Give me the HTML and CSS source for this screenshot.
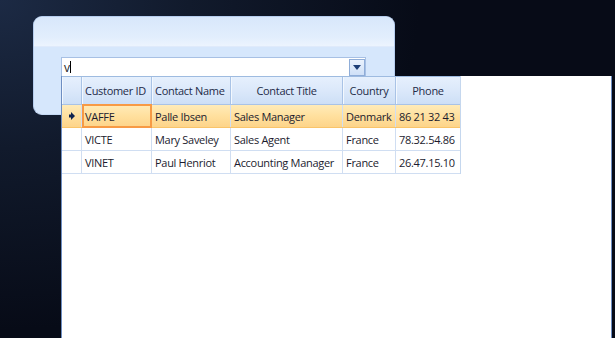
FILE: index.html
```html
<!DOCTYPE html>
<html>
<head>
<meta charset="utf-8">
<link rel="stylesheet" href="styles.css">
</head>
<body>
<div class="desk">
  <div class="panel">
    <div class="panel-top"></div>
    <div class="combo">
      <div class="combo-text">v<span class="caret"></span></div>
      <div class="combo-btn">
        <svg width="8" height="5" viewBox="0 0 8 5"><path d="M0 0 H8 L4 5 Z" fill="#1e3f77"/></svg>
      </div>
    </div>
  </div>
</div>
<div class="popup">
  <div class="grid">
    <div class="row head">
      <div class="cell rh"></div>
      <div class="cell c1">Customer ID</div>
      <div class="cell c2">Contact Name</div>
      <div class="cell c3 center">Contact Title</div>
      <div class="cell c4 center">Country</div>
      <div class="cell c5 center">Phone</div>
    </div>
    <div class="row sel">
      <div class="cell rh"><svg width="6" height="8" viewBox="0 0 6 8"><path d="M0 2.5 H2 V0 L6 4 L2 8 V5.5 H0 Z" fill="#0f2350"/></svg></div>
      <div class="cell c1 cur">VAFFE</div>
      <div class="cell c2">Palle Ibsen</div>
      <div class="cell c3">Sales Manager</div>
      <div class="cell c4">Denmark</div>
      <div class="cell c5">86 21 32 43</div>
    </div>
    <div class="row">
      <div class="cell rh"></div>
      <div class="cell c1">VICTE</div>
      <div class="cell c2">Mary Saveley</div>
      <div class="cell c3">Sales Agent</div>
      <div class="cell c4">France</div>
      <div class="cell c5">78.32.54.86</div>
    </div>
    <div class="row">
      <div class="cell rh"></div>
      <div class="cell c1">VINET</div>
      <div class="cell c2">Paul Henriot</div>
      <div class="cell c3">Accounting Manager</div>
      <div class="cell c4">France</div>
      <div class="cell c5">26.47.15.10</div>
    </div>
  </div>
</div>
</body>
</html>
```
FILE: styles.css
```css
html, body {
  margin: 0;
  padding: 0;
}
body {
  width: 615px;
  height: 338px;
  overflow: hidden;
  position: relative;
  font-family: "Open Sans", "Noto Sans", sans-serif;
  font-size: 11px;
  letter-spacing: -0.3px;
  color: #1b1b2e;
  background: radial-gradient(ellipse 420px 330px at 0px 0px, #1c2a44 0%, #111a2c 45%, #070b17 100%);
  background-color: #070b17;
}
.desk {
  padding: 16px 0 0 33px;
}
.panel {
  width: 362px;
  height: 99px;
  border-radius: 9px;
  background: #d6e7fc;
  overflow: hidden;
  box-sizing: border-box;
  border: 1px solid #b6cdee;
  border-bottom-color: #c5d9f3;
}
.panel-top {
  height: 29px;
  background: linear-gradient(to bottom, #d8e7fb 0%, #e2eefd 70%, #ecf4fe 100%);
  border-bottom: 1px solid #dfeafb;
}
.combo {
  margin: 10px 0 0 27px;
  width: 305px;
  height: 20px;
  box-sizing: border-box;
  border: 1px solid #a7c0e4;
  background: #fff;
  display: flex;
  align-items: stretch;
}
.combo-text {
  flex: 1;
  padding-left: 2px;
  line-height: 17px;
  font-size: 12px;
  color: #222;
  display: flex;
  align-items: center;
}
.caret {
  display: inline-block;
  width: 1px;
  height: 12px;
  background: #000;
}
.combo-btn {
  width: 16px;
  box-sizing: border-box;
  border: 1px solid #8fadd8;
  margin: 1px 0 0 0;
  height: 17px;
  background: linear-gradient(to bottom, #eaf2fd, #cfe0f7);
  display: flex;
  align-items: center;
  justify-content: center;
}
.popup {
  position: absolute;
  left: 61px;
  top: 76px;
  width: 551px;
  height: 270px;
  box-sizing: border-box;
  background: #fff;
  border-left: 1px solid #6e8ec2;
  border-right: 1px solid #6e8ec2;
}
.grid {
  width: 398px;
  border-right: 1px solid #c5d7ee;
}
.row {
  display: flex;
  height: 23px;
  border-bottom: 1px solid #d0def2;
  box-sizing: border-box;
}
.row.head {
  height: 29px;
  border-top: 1px solid #9ebbe0;
  border-bottom: 1px solid #a9c3e6;
  background: linear-gradient(to bottom, #e6f0fd 0%, #dbe8fa 50%, #cddff6 100%);
  color: #1e2b48;
}
.row.sel {
  background: linear-gradient(to bottom, #ffebb8 0%, #ffe09e 50%, #fdd48a 100%);
  border-bottom: 1px solid #f9c46a;
}
.cell {
  box-sizing: border-box;
  border-right: 1px solid #d0def2;
  padding-left: 3px;
  display: flex;
  align-items: center;
  white-space: nowrap;
  overflow: hidden;
}
.head .cell {
  border-right: 1px solid #a9c3e6;
  box-shadow: inset 1px 0 0 #f3f8fe;
}
.center {
  justify-content: center;
  padding-left: 0;
}
.rh { width: 20px; padding-left: 0; justify-content: center; }
.c1 { width: 70px; }
.c2 { width: 79px; }
.c3 { width: 112px; }
.c4 { width: 53px; }
.c5 { width: 64px; border-right: none; }
.head .c5 { border-right: none; }
.cur {
  border: 2px solid #f79a45;
  margin-top: -1px;
  height: 24px;
  padding-left: 1px;
}
```
